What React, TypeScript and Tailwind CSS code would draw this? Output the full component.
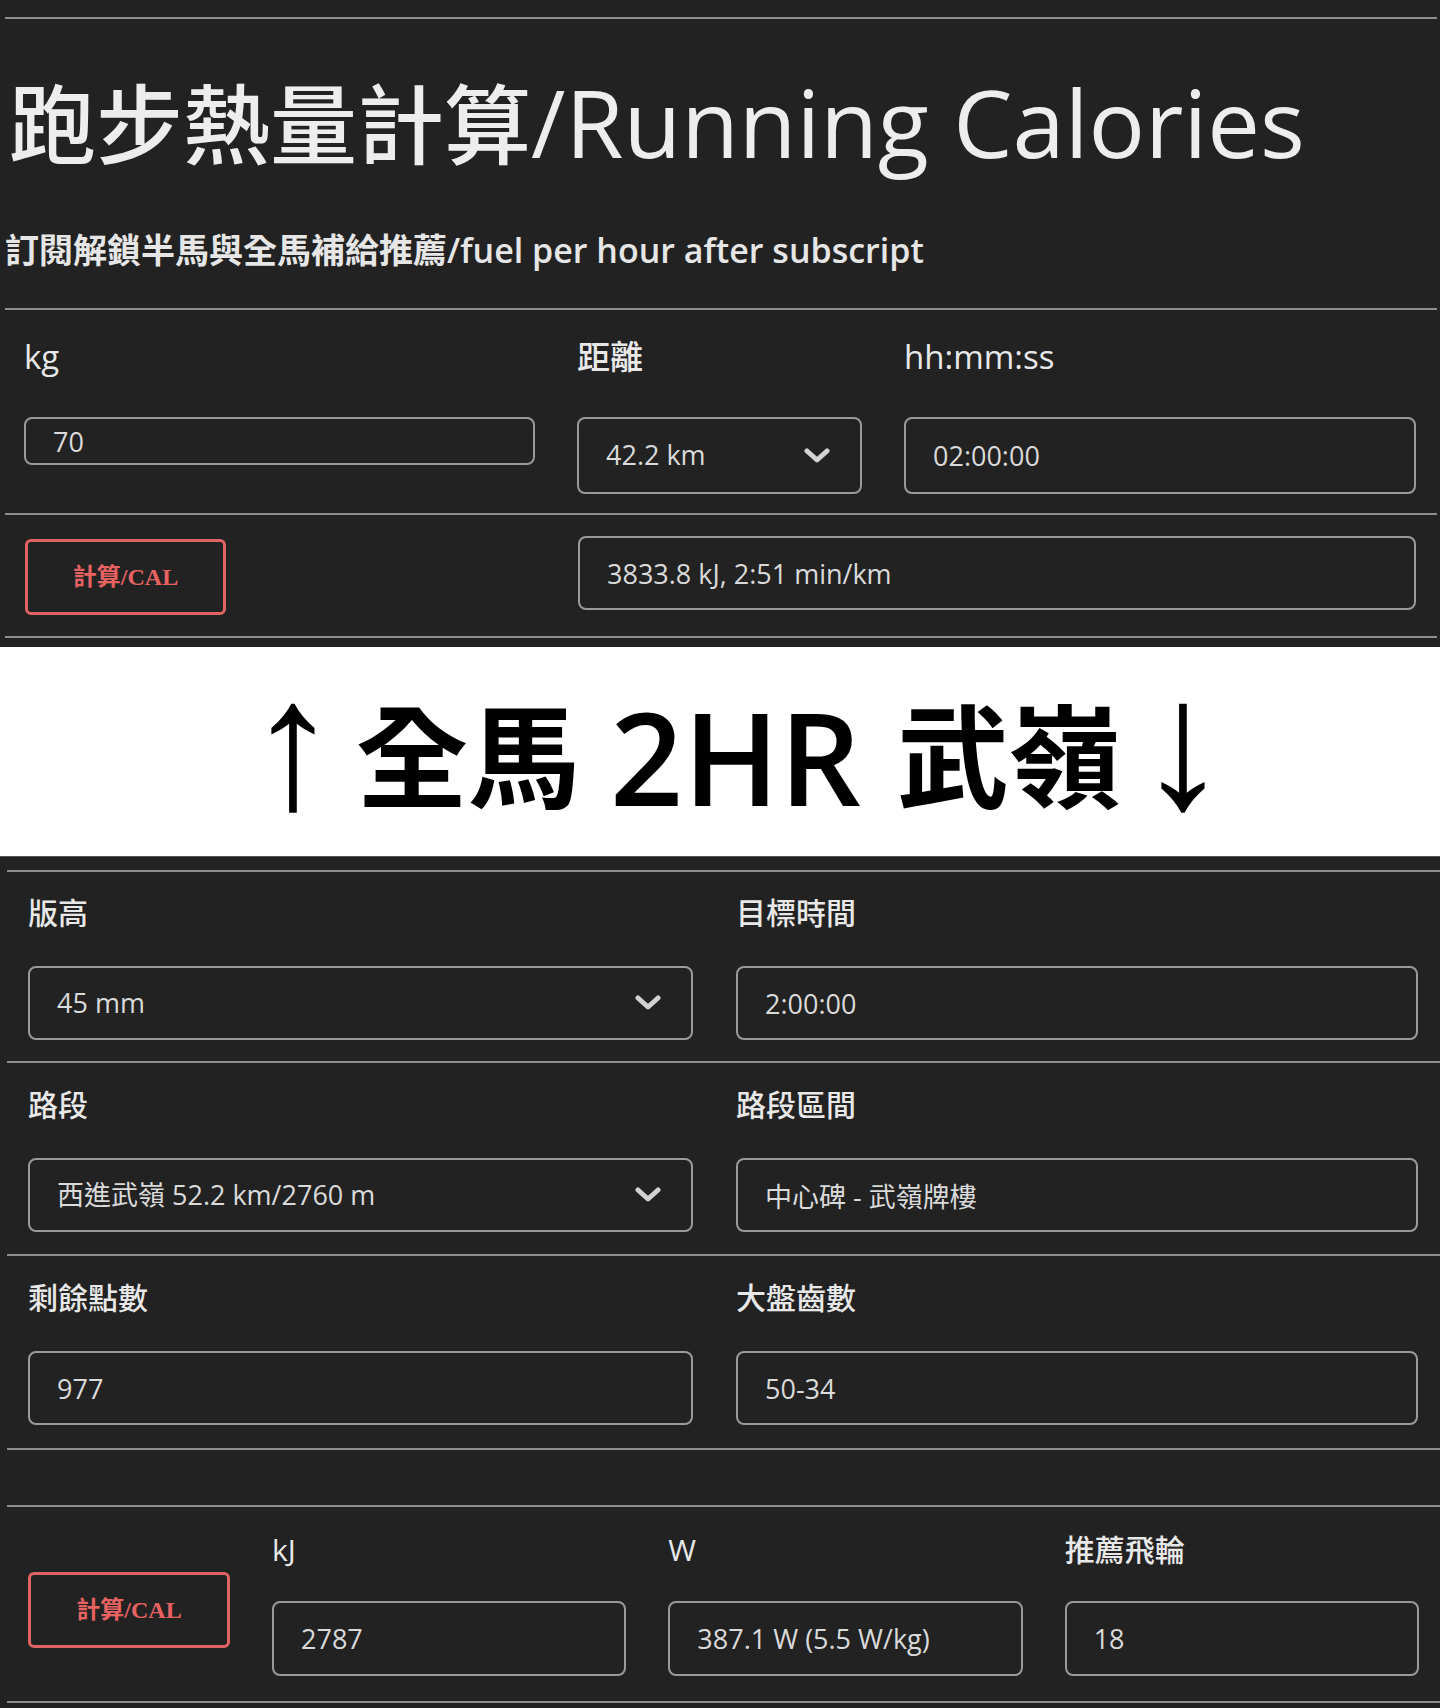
import React from "react";

const sans = "font-['Open_Sans','Noto_Sans_CJK_TC',sans-serif]";

function Rule({ className = "" }: { className?: string }) {
  return <div className={`h-[2px] bg-[#8e8e8e] ${className}`} />;
}

function Chevron() {
  return (
    <svg width="26" height="16" viewBox="0 0 26 16" className="pointer-events-none absolute right-[32px] top-1/2 -translate-y-1/2">
      <polyline points="3,3 13,12 23,3" fill="none" stroke="#d2d2d2" strokeWidth="5" strokeLinecap="round" strokeLinejoin="round" />
    </svg>
  );
}

function TextBox({ value, h = "h-[74px]" }: { value: string; h?: string }) {
  return (
    <input
      readOnly
      value={value}
      className={`${h} w-full rounded-[8px] border-2 border-[#9a9a9a] bg-transparent pl-[27px] text-[27px] text-[#dadada] outline-none`}
    />
  );
}

function SelectBox({ value, h = "h-[74px]" }: { value: string; h?: string }) {
  return (
    <div className="relative w-full">
      <select
        value={value}
        onChange={() => {}}
        className={`${h} w-full appearance-none rounded-[8px] border-2 border-[#9a9a9a] bg-transparent pl-[27px] text-[27px] text-[#dadada] outline-none`}
      >
        <option value={value} className="bg-[#222222]">{value}</option>
      </select>
      <Chevron />
    </div>
  );
}

function CalButton({ className = "" }: { className?: string }) {
  return (
    <button
      className={`h-[76px] w-[201px] rounded-[6px] border-[3px] border-[#e16464] bg-transparent text-[24px] font-bold text-[#e86262] font-['Liberation_Serif','Noto_Sans_CJK_TC',serif] ${className}`}
    >
      計算/CAL
    </button>
  );
}

function Label({ children, size = "text-[33px]" }: { children: React.ReactNode; size?: string }) {
  return <div className={`h-[40px] leading-[40px] ${size} font-medium text-[#e8e8e8]`}>{children}</div>;
}

function Field2({ label, children }: { label: string; children: React.ReactNode }) {
  return (
    <div className="flex flex-col">
      <Label size="text-[30px]">{label}</Label>
      <div className="mt-[33px]">{children}</div>
    </div>
  );
}

export default function App() {
  return (
    <div className={`min-h-[1708px] w-full bg-[#222222] ${sans}`}>
      {/* running calories calculator */}
      <section className="pt-[17px]">
        <Rule className="ml-[5px] mr-[3px]" />
        <h1 className="ml-[9px] mt-[58px] h-[90px] leading-[90px] font-medium text-[#ededed] whitespace-nowrap">
          <span className="text-[87px]">跑步熱量計算</span>
          <span className="text-[94px]">/Running Calories</span>
        </h1>
        <p className="ml-[5px] mt-[63px] h-[40px] text-[34px] leading-[40px] font-semibold text-[#e6e6e6] whitespace-nowrap">
          訂閱解鎖半馬與全馬補給推薦/fuel per hour after subscript
        </p>
        <Rule className="ml-[5px] mr-[3px] mt-[38px]" />

        <div className="grid grid-cols-[511px_285px_1fr] gap-x-[42px] px-[24px] pt-[27px] pb-[19px]">
          <div className="flex flex-col">
            <Label>kg</Label>
            <div className="mt-[40px]">
              <TextBox value="70" h="h-[48px]" />
            </div>
          </div>
          <div className="flex flex-col">
            <Label>距離</Label>
            <div className="mt-[40px]">
              <SelectBox value="42.2 km" h="h-[77px]" />
            </div>
          </div>
          <div className="flex flex-col">
            <Label>hh:mm:ss</Label>
            <div className="mt-[40px]">
              <TextBox value="02:00:00" h="h-[77px]" />
            </div>
          </div>
        </div>
        <Rule className="ml-[5px] mr-[3px]" />

        <div className="flex items-start pl-[25px] pr-[24px] pb-[21px]">
          <CalButton className="mt-[24px]" />
          <div className="ml-[352px] mt-[21px] flex-1">
            <TextBox value="3833.8 kJ, 2:51 min/km" />
          </div>
        </div>
        <Rule className="ml-[5px] mr-[3px]" />
        <div className="h-[9px]" />
      </section>

      {/* route banner */}
      <div className="flex h-[209px] items-center justify-center bg-white pl-[36px] pt-[10px]">
        <div className="flex items-center leading-none font-semibold text-black whitespace-nowrap">
          <span className="mr-[17px] mb-[28px] text-[184px] font-normal font-['Liberation_Sans',sans-serif]">↑</span>
          <span className="mr-[30px] text-[112px]">全馬</span>
          <span className="mr-[36px] text-[128px]">2HR</span>
          <span className="mr-[16px] text-[112px]">武嶺</span>
          <span className="mb-[28px] text-[184px] font-normal font-['Liberation_Sans',sans-serif]">↓</span>
        </div>
      </div>
      <div className="h-[14px] border-t border-[#555555]" />

      {/* climb power calculator */}
      <section>
        <Rule className="ml-[7px]" />
        <div className="grid grid-cols-[665px_1fr] gap-x-[43px] pl-[28px] pr-[22px] pt-[21px] pb-[21px]">
          <Field2 label="版高">
            <SelectBox value="45 mm" />
          </Field2>
          <Field2 label="目標時間">
            <TextBox value="2:00:00" />
          </Field2>
        </div>
        <Rule className="ml-[7px]" />
        <div className="grid grid-cols-[665px_1fr] gap-x-[43px] pl-[28px] pr-[22px] pt-[22px] pb-[22px]">
          <Field2 label="路段">
            <SelectBox value="西進武嶺 52.2 km/2760 m" />
          </Field2>
          <Field2 label="路段區間">
            <TextBox value="中心碑 - 武嶺牌樓" />
          </Field2>
        </div>
        <Rule className="ml-[7px]" />
        <div className="grid grid-cols-[665px_1fr] gap-x-[43px] pl-[28px] pr-[22px] pt-[22px] pb-[23px]">
          <Field2 label="剩餘點數">
            <TextBox value="977" />
          </Field2>
          <Field2 label="大盤齒數">
            <TextBox value="50-34" />
          </Field2>
        </div>
        <Rule className="ml-[7px]" />
        <div className="h-[55px]" />
        <Rule className="ml-[7px]" />

        <div className="grid grid-cols-[202px_1fr_1fr_1fr] gap-x-[42px] pl-[28px] pr-[21px] pt-[23px] pb-[25px]">
          <div className="pt-[42px]">
            <CalButton className="w-[202px]" />
          </div>
          <div className="flex flex-col">
            <Label size="text-[30px]">kJ</Label>
            <div className="mt-[31px]">
              <TextBox value="2787" h="h-[75px]" />
            </div>
          </div>
          <div className="flex flex-col">
            <Label size="text-[30px]">W</Label>
            <div className="mt-[31px]">
              <TextBox value="387.1 W (5.5 W/kg)" h="h-[75px]" />
            </div>
          </div>
          <div className="flex flex-col">
            <Label size="text-[30px]">推薦飛輪</Label>
            <div className="mt-[31px]">
              <TextBox value="18" h="h-[75px]" />
            </div>
          </div>
        </div>
        <Rule className="ml-[7px]" />
      </section>
    </div>
  );
}
